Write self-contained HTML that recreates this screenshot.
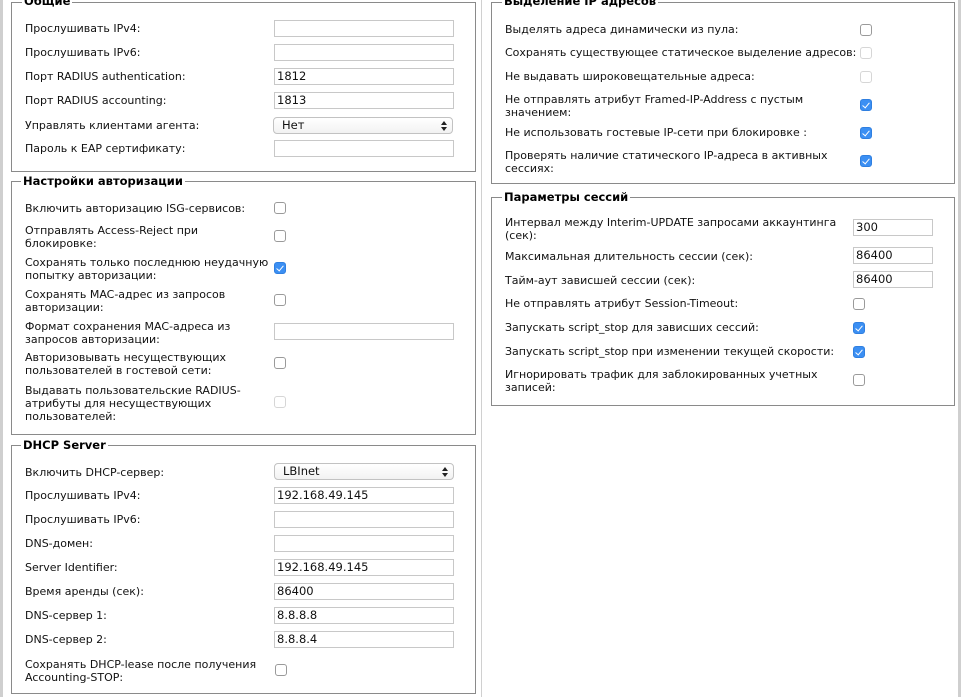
<!DOCTYPE html>
<html><head><meta charset="utf-8"><style>
*{box-sizing:border-box;margin:0;padding:0}
body{width:961px;height:697px;background:#fff;position:relative;overflow:hidden;font-family:"DejaVu Sans","Liberation Sans",sans-serif;font-size:11px;color:#111}
.fs{position:absolute;border:1px solid #8a8a8a;box-shadow:inset 1px 1px 0 #fff}
.lg{position:absolute;background:#fff;font-weight:bold;font-size:11.5px;padding:0 2px;line-height:14px;color:#000}
.t{position:absolute;line-height:13px;white-space:nowrap}
.in{position:absolute;height:17px;border:1px solid #c8c8c8;background:#fff;padding-left:2px;line-height:15px;font-size:11.5px}
.sel{position:absolute;height:17px;border:1px solid #c2c2c2;border-radius:4px;background:linear-gradient(#fff,#f2f2f2);padding-left:8px;line-height:15px;font-size:11.5px}
.sel:after{content:"";position:absolute;right:5px;top:3px;width:0;height:0;border-left:3px solid transparent;border-right:3px solid transparent;border-bottom:4px solid #222}
.sel:before{content:"";position:absolute;right:5px;top:9px;width:0;height:0;border-left:3px solid transparent;border-right:3px solid transparent;border-top:4px solid #222}
.cb{position:absolute;width:12px;height:12px;border:1px solid #9a9a9a;border-radius:3px;background:#fff}
.cb.d{border-color:#d6d6d6}
.cb.c{background:#3b8ff3;border-color:#2f7fe0}
.cb.c:after{content:"";position:absolute;left:3px;top:1px;width:3px;height:6px;border:solid #fff;border-width:0 1.5px 1.5px 0;transform:rotate(40deg)}
</style></head><body>
<div style="position:absolute;left:0;top:0;width:3px;height:697px;background:#cfcfcf"></div>
<div style="position:absolute;left:481px;top:0;width:1px;height:697px;background:#d0d0d0"></div>
<div style="position:absolute;left:958px;top:0;width:3px;height:697px;background:#cfcfcf"></div>

<!-- Left 1 -->
<div class="fs" style="left:11px;top:2px;width:465px;height:170px"></div>
<div class="lg" style="left:22px;top:-6px">Общие</div>
<div class="t" style="left:25px;top:22px">Прослушивать IPv4:</div><div class="in" style="left:274px;top:20px;width:180px"></div>
<div class="t" style="left:25px;top:46px">Прослушивать IPv6:</div><div class="in" style="left:274px;top:44px;width:180px"></div>
<div class="t" style="left:25px;top:70px">Порт RADIUS authentication:</div><div class="in" style="left:274px;top:68px;width:180px">1812</div>
<div class="t" style="left:25px;top:94px">Порт RADIUS accounting:</div><div class="in" style="left:274px;top:92px;width:180px">1813</div>
<div class="t" style="left:25px;top:119px">Управлять клиентами агента:</div><div class="sel" style="left:273px;top:117px;width:180px">Нет</div>
<div class="t" style="left:25px;top:142px">Пароль к EAP сертификату:</div><div class="in" style="left:274px;top:140px;width:180px"></div>

<!-- Left 2 -->
<div class="fs" style="left:11px;top:181px;width:465px;height:254px"></div>
<div class="lg" style="left:21px;top:174px">Настройки авторизации</div>
<div class="t" style="left:25px;top:202px">Включить авторизацию ISG-сервисов:</div><div class="cb" style="left:274px;top:202px"></div>
<div class="t" style="left:25px;top:224px">Отправлять Access-Reject при<br>блокировке:</div><div class="cb" style="left:274px;top:230px"></div>
<div class="t" style="left:25px;top:256px">Сохранять только последнюю неудачную<br>попытку авторизации:</div><div class="cb c" style="left:274px;top:262px"></div>
<div class="t" style="left:25px;top:288px">Сохранять MAC-адрес из запросов<br>авторизации:</div><div class="cb" style="left:274px;top:294px"></div>
<div class="t" style="left:25px;top:320px">Формат сохранения MAC-адреса из<br>запросов авторизации:</div><div class="in" style="left:274px;top:323px;width:180px"></div>
<div class="t" style="left:25px;top:351px">Авторизовывать несуществующих<br>пользователей в гостевой сети:</div><div class="cb" style="left:274px;top:357px"></div>
<div class="t" style="left:25px;top:384px">Выдавать пользовательские RADIUS-<br>атрибуты для несуществующих<br>пользователей:</div><div class="cb d" style="left:274px;top:396px"></div>

<!-- Left 3 -->
<div class="fs" style="left:11px;top:445px;width:465px;height:249px"></div>
<div class="lg" style="left:21px;top:438px">DHCP Server</div>
<div class="t" style="left:25px;top:466px">Включить DHCP-сервер:</div><div class="sel" style="left:274px;top:463px;width:180px">LBInet</div>
<div class="t" style="left:25px;top:489px">Прослушивать IPv4:</div><div class="in" style="left:274px;top:487px;width:180px">192.168.49.145</div>
<div class="t" style="left:25px;top:513px">Прослушивать IPv6:</div><div class="in" style="left:274px;top:511px;width:180px"></div>
<div class="t" style="left:25px;top:537px">DNS-домен:</div><div class="in" style="left:274px;top:535px;width:180px"></div>
<div class="t" style="left:25px;top:561px">Server Identifier:</div><div class="in" style="left:274px;top:559px;width:180px">192.168.49.145</div>
<div class="t" style="left:25px;top:585px">Время аренды (сек):</div><div class="in" style="left:274px;top:583px;width:180px">86400</div>
<div class="t" style="left:25px;top:609px">DNS-сервер 1:</div><div class="in" style="left:274px;top:607px;width:180px">8.8.8.8</div>
<div class="t" style="left:25px;top:633px">DNS-сервер 2:</div><div class="in" style="left:274px;top:631px;width:180px">8.8.8.4</div>
<div class="t" style="left:25px;top:658px">Сохранять DHCP-lease после получения<br>Accounting-STOP:</div><div class="cb" style="left:275px;top:664px"></div>

<!-- Right 1 -->
<div class="fs" style="left:491px;top:2px;width:464px;height:182px"></div>
<div class="lg" style="left:502px;top:-6px">Выделение IP адресов</div>
<div class="t" style="left:505px;top:23px">Выделять адреса динамически из пула:</div><div class="cb" style="left:860px;top:24px"></div>
<div class="t" style="left:505px;top:46px">Сохранять существующее статическое выделение адресов:</div><div class="cb d" style="left:860px;top:47px"></div>
<div class="t" style="left:505px;top:70px">Не выдавать широковещательные адреса:</div><div class="cb d" style="left:860px;top:71px"></div>
<div class="t" style="left:505px;top:93px">Не отправлять атрибут Framed-IP-Address с пустым<br>значением:</div><div class="cb c" style="left:860px;top:99px"></div>
<div class="t" style="left:505px;top:126px">Не использовать гостевые IP-сети при блокировке :</div><div class="cb c" style="left:860px;top:127px"></div>
<div class="t" style="left:505px;top:149px">Проверять наличие статического IP-адреса в активных<br>сессиях:</div><div class="cb c" style="left:860px;top:155px"></div>

<!-- Right 2 -->
<div class="fs" style="left:491px;top:197px;width:464px;height:209px"></div>
<div class="lg" style="left:502px;top:190px">Параметры сессий</div>
<div class="t" style="left:505px;top:216px">Интервал между Interim-UPDATE запросами аккаунтинга<br>(сек):</div><div class="in" style="left:853px;top:219px;width:80px">300</div>
<div class="t" style="left:505px;top:250px">Максимальная длительность сессии (сек):</div><div class="in" style="left:853px;top:247px;width:80px">86400</div>
<div class="t" style="left:505px;top:274px">Тайм-аут зависшей сессии (сек):</div><div class="in" style="left:853px;top:271px;width:80px">86400</div>
<div class="t" style="left:505px;top:297px">Не отправлять атрибут Session-Timeout:</div><div class="cb" style="left:853px;top:298px"></div>
<div class="t" style="left:505px;top:321px">Запускать script_stop для зависших сессий:</div><div class="cb c" style="left:853px;top:322px"></div>
<div class="t" style="left:505px;top:345px">Запускать script_stop при изменении текущей скорости:</div><div class="cb c" style="left:853px;top:346px"></div>
<div class="t" style="left:505px;top:368px">Игнорировать трафик для заблокированных учетных<br>записей:</div><div class="cb" style="left:853px;top:374px"></div>
</body></html>
